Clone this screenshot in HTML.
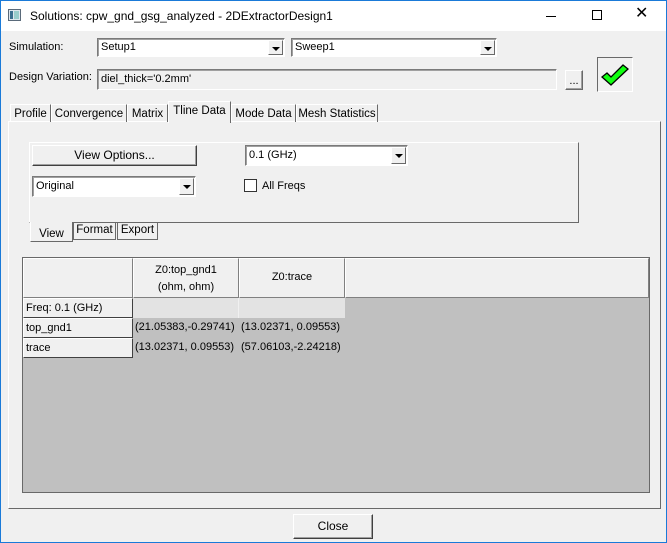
<!DOCTYPE html>
<html><head><style>
*{box-sizing:border-box;margin:0;padding:0}
body{width:667px;height:543px;background:#f0f0f0;font-family:"Liberation Sans",sans-serif;font-size:11px;color:#000;position:relative;overflow:hidden}
.a{position:absolute;white-space:nowrap}
.win{left:0;top:0;width:667px;height:543px;border:1px solid #1a7ad8}
.title{left:1px;top:1px;width:665px;height:30px;background:#fff}
.combo{background:#fff;border:1px solid #7a7a7a;border-right-color:#fff;border-bottom-color:#fff;box-shadow:inset 1px 1px 0 #a0a0a0}
.combo span{position:absolute;left:3px;top:2px}
.dd{position:absolute;right:1px;top:1px;width:15px;bottom:1px;background:#f0f0f0;border:1px solid;border-color:#fff #696969 #696969 #fff}
.dd:after{content:"";position:absolute;left:3px;top:6px;border-left:4px solid transparent;border-right:4px solid transparent;border-top:4px solid #000}
.btn{background:#f0f0f0;border:1px solid;border-color:#fff #696969 #696969 #fff;box-shadow:inset -1px -1px 0 #a0a0a0;text-align:center}
.tab{border:1px solid;border-color:#fff #696969 transparent #fff;border-bottom:none;text-align:center;padding-top:3px;font-size:11.5px;white-space:nowrap;overflow:hidden}
.gc{position:absolute;border:1px solid;border-color:#fff #808080 #808080 #fff;background:#f0f0f0;font-size:11px;white-space:nowrap;overflow:hidden}
.d{position:absolute;font-size:11px;white-space:nowrap}
</style></head><body>
<div class="a win"></div>
<div class="a title"></div>
<svg class="a" style="left:8px;top:9px" width="13" height="12"><rect x="0.5" y="0.5" width="12" height="11" fill="#dfe6ee" stroke="#5a6a7a"/><rect x="2" y="2" width="3" height="8" fill="#3b6e8f"/><rect x="6" y="2" width="5" height="8" fill="#9cc"/></svg>
<div class="a" style="left:30px;top:9px;font-size:12px">Solutions: cpw_gnd_gsg_analyzed - 2DExtractorDesign1</div>
<div class="a" style="left:546px;top:16px;width:10px;height:1px;background:#000"></div>
<div class="a" style="left:592px;top:10px;width:10px;height:10px;border:1px solid #000"></div>
<div class="a" style="left:635px;top:6px;font-size:16px;line-height:16px">✕</div>

<div class="a" style="left:9px;top:41px;font-size:11px">Simulation:</div>
<div class="a combo" style="left:97px;top:38px;width:188px;height:19px"><span>Setup1</span><div class="dd"></div></div>
<div class="a combo" style="left:291px;top:38px;width:206px;height:19px"><span>Sweep1</span><div class="dd"></div></div>
<div class="a" style="left:9px;top:71px">Design Variation:</div>
<div class="a combo" style="left:97px;top:69px;width:460px;height:21px;background:#f0f0f0"><span style="top:3px">diel_thick='0.2mm'</span></div>
<div class="a btn" style="left:565px;top:70px;width:18px;height:20px;line-height:20px">...</div>
<div class="a" style="left:597px;top:57px;width:36px;height:35px;border:1px solid;border-color:#696969 #fff #fff #696969"></div>
<svg class="a" style="left:601px;top:63px" width="28" height="24"><path d="M1 14 L6 10 L10 14 L22 2 L27 6 L10 22 Z" fill="#1f1" stroke="#000" stroke-width="1.3"/></svg>

<div class="a" style="left:8px;top:121px;width:653px;height:388px;border:1px solid;border-color:#fff #696969 #696969 #fff"></div>
<div class="a tab" style="left:10px;top:104px;width:41px;height:18px">Profile</div>
<div class="a tab" style="left:51px;top:104px;width:76px;height:18px">Convergence</div>
<div class="a tab" style="left:127px;top:104px;width:41px;height:18px">Matrix</div>
<div class="a tab" style="left:168px;top:101px;width:63px;height:22px;background:#f0f0f0">Tline Data</div>
<div class="a tab" style="left:231px;top:104px;width:65px;height:18px">Mode Data</div>
<div class="a tab" style="left:296px;top:104px;width:82px;height:18px">Mesh Statistics</div>

<div class="a" style="left:29px;top:142px;width:550px;height:81px;border:1px solid;border-color:#fff #696969 #696969 #fff"></div>
<div class="a btn" style="left:32px;top:145px;width:165px;height:21px;line-height:19px;font-size:12px;border-color:#fff #404040 #404040 #fff">View Options...</div>
<div class="a combo" style="left:32px;top:176px;width:164px;height:21px"><span style="top:3px">Original</span><div class="dd"></div></div>
<div class="a combo" style="left:245px;top:145px;width:163px;height:21px"><span style="top:3px">0.1 (GHz)</span><div class="dd"></div></div>
<div class="a" style="left:244px;top:179px;width:13px;height:13px;background:#fff;border:1px solid #333"></div>
<div class="a" style="left:262px;top:180px">All Freqs</div>
<div class="a tab" style="left:30px;top:222px;width:43px;height:20px;border-top:none;border-bottom:1px solid #696969;background:#f0f0f0;padding-top:6px">View</div>
<div class="a tab" style="left:73px;top:222px;width:43px;height:18px;border-top:none;border-bottom:1px solid #696969;border-left:1px solid #696969;padding-top:2px">Format</div>
<div class="a tab" style="left:117px;top:222px;width:41px;height:18px;border-top:none;border-bottom:1px solid #696969;border-left:1px solid #696969;padding-top:2px">Export</div>

<div class="a" style="left:22px;top:257px;width:628px;height:236px;background:#c0c0c0;border:1px solid #696969"></div>
<div class="gc" style="left:23px;top:258px;width:110px;height:40px"></div>
<div class="gc" style="left:133px;top:258px;width:106px;height:40px;text-align:center;padding-top:3px;line-height:17px">Z0:top_gnd1<br>(ohm, ohm)</div>
<div class="gc" style="left:239px;top:258px;width:106px;height:40px;text-align:center;padding-top:12px">Z0:trace</div>
<div class="gc" style="left:345px;top:258px;width:304px;height:40px"></div>
<div class="a" style="left:133px;top:298px;width:212px;height:20px;background:#e3e3e3"></div>
<div class="a" style="left:238px;top:298px;width:1px;height:20px;background:#f0f0f0"></div>
<div class="gc" style="left:23px;top:298px;width:110px;height:20px;padding:3px 0 0 2px;border-right-color:#404040;border-bottom-color:#404040">Freq: 0.1 (GHz)</div>
<div class="gc" style="left:23px;top:318px;width:110px;height:20px;padding:3px 0 0 2px;border-right-color:#404040;border-bottom-color:#404040">top_gnd1</div>
<div class="gc" style="left:23px;top:338px;width:110px;height:20px;padding:3px 0 0 2px;border-right-color:#404040;border-bottom-color:#404040">trace</div>
<div class="d" style="left:135px;top:321px">(21.05383,-0.29741)</div>
<div class="d" style="left:241px;top:321px">(13.02371, 0.09553)</div>
<div class="d" style="left:135px;top:341px">(13.02371, 0.09553)</div>
<div class="d" style="left:241px;top:341px">(57.06103,-2.24218)</div>

<div class="a btn" style="left:293px;top:514px;width:80px;height:25px;line-height:23px;font-size:12px;border-color:#fff #404040 #404040 #fff">Close</div>
</body></html>
